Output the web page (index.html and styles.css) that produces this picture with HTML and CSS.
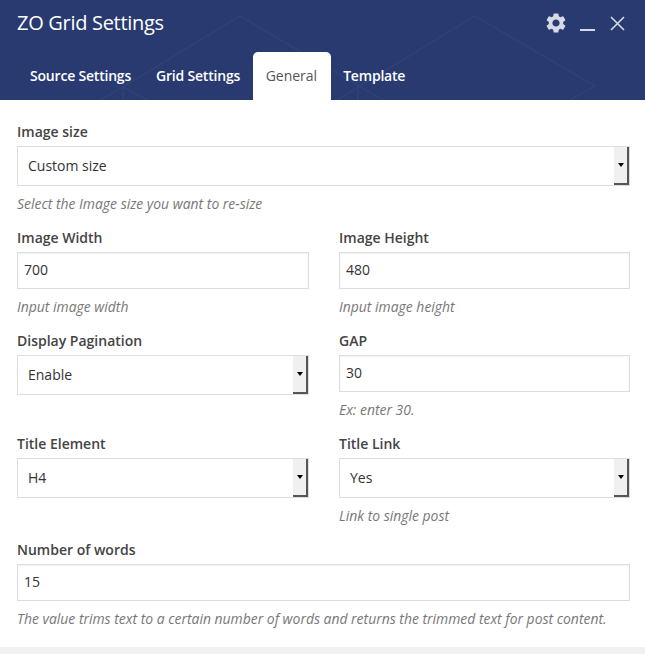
FILE: index.html
```html
<!DOCTYPE html>
<html lang="en">
<head>
<meta charset="utf-8">
<title>ZO Grid Settings</title>
<link rel="stylesheet" href="styles.css">
</head>
<body>
<div class="dialog">
  <header class="head">
    <svg class="pattern" width="645" height="100" viewBox="0 0 645 100" fill="none">
      <path d="M147 100L123 87L240 16L383 100M123 87V100M123 87L100 100"/>
      <path d="M337 100L475 16L595 86L570 100M358 85V100"/>
    </svg>
    <div class="titlebar">
      <h1 class="title">ZO Grid Settings</h1>
      <div class="actions">
        <svg class="icon" width="20" height="20" viewBox="2 2 20 20"><path fill="#d5dae6" d="M19.14 12.94c.04-.3.06-.61.06-.94 0-.32-.02-.64-.07-.94l2.03-1.58a.49.49 0 0 0 .12-.61l-1.92-3.32a.488.488 0 0 0-.59-.22l-2.39.96c-.5-.38-1.03-.7-1.62-.94l-.36-2.54a.484.484 0 0 0-.48-.41h-3.84c-.24 0-.43.17-.47.41l-.36 2.54c-.59.24-1.13.57-1.62.94l-2.39-.96c-.22-.08-.47 0-.59.22L2.74 8.87c-.12.21-.08.47.12.61l2.03 1.58c-.05.3-.09.63-.09.94s.02.64.07.94l-2.03 1.58a.49.49 0 0 0-.12.61l1.92 3.32c.12.22.37.29.59.22l2.39-.96c.5.38 1.03.7 1.62.94l.36 2.54c.05.24.24.41.48.41h3.84c.24 0 .44-.17.47-.41l.36-2.54c.59-.24 1.13-.56 1.62-.94l2.39.96c.22.08.47 0 .59-.22l1.92-3.32c.12-.22.07-.47-.12-.61l-2.01-1.58zM12 15.6c-1.98 0-3.6-1.62-3.6-3.6s1.62-3.6 3.6-3.6 3.6 1.62 3.6 3.6-1.62 3.6-3.6 3.6z"/></svg>
        <svg class="icon min" width="15" height="15" viewBox="0 0 15 15"><path stroke="#d5dae6" stroke-width="2" d="M0 14h15"/></svg>
        <svg class="icon" width="15" height="15" viewBox="0 0 15 15"><path stroke="#d5dae6" stroke-width="1.6" d="M1 1l13 13M14 1L1 14"/></svg>
      </div>
    </div>
    <nav class="tabs">
      <a class="tab">Source Settings</a>
      <a class="tab">Grid Settings</a>
      <a class="tab active">General</a>
      <a class="tab">Template</a>
    </nav>
  </header>
  <main class="form">
    <div class="field wide">
      <label class="label">Image size</label>
      <div class="select"><span class="value">Custom size</span><span class="arrow"></span></div>
      <p class="hint">Select the Image size you want to re-size</p>
    </div>
    <div class="field">
      <label class="label">Image Width</label>
      <div class="input">700</div>
      <p class="hint">Input image width</p>
    </div>
    <div class="field">
      <label class="label">Image Height</label>
      <div class="input">480</div>
      <p class="hint">Input image height</p>
    </div>
    <div class="field">
      <label class="label">Display Pagination</label>
      <div class="select"><span class="value">Enable</span><span class="arrow"></span></div>
    </div>
    <div class="field">
      <label class="label">GAP</label>
      <div class="input">30</div>
      <p class="hint">Ex: enter 30.</p>
    </div>
    <div class="field">
      <label class="label">Title Element</label>
      <div class="select"><span class="value">H4</span><span class="arrow"></span></div>
    </div>
    <div class="field">
      <label class="label">Title Link</label>
      <div class="select"><span class="value">Yes</span><span class="arrow"></span></div>
      <p class="hint">Link to single post</p>
    </div>
    <div class="field wide">
      <label class="label">Number of words</label>
      <div class="input">15</div>
      <p class="hint">The value trims text to a certain number of words and returns the trimmed text for post content.</p>
    </div>
  </main>
  <footer class="foot"></footer>
</div>
</body>
</html>
```
FILE: styles.css
```css
* { box-sizing: border-box; }
html, body { margin: 0; padding: 0; background: #fff; }
body { font-family: "Open Sans", "Noto Sans", sans-serif; color: #444; }
.dialog { width: 645px; height: 654px; display: flex; flex-direction: column; overflow: hidden; }
.head { position: relative; height: 100px; background: #283a70; display: flex; flex-direction: column; flex: none; }
.pattern { position: absolute; left: 0; top: 0; }
.pattern path { stroke: #2e4177; stroke-width: 2; }
.titlebar { position: relative; display: flex; justify-content: space-between; align-items: center; height: 52px; padding: 0 20px 6px 17px; }
.title { margin: 0; font-size: 20px; font-weight: 400; color: #fff; line-height: 28px; letter-spacing: -0.3px; }
.actions { display: flex; align-items: center; gap: 14px; }
.icon { display: block; }
.min { margin-right: 1px; }
.tabs { position: relative; display: flex; height: 48px; padding-left: 17.5px; }
.tab { display: block; padding: 14px 12.5px 0; font-size: 14px; line-height: 20px; font-weight: 600; letter-spacing: -0.2px; color: #fff; border-radius: 5px 5px 0 0; }
.tab.active { background: #fff; color: #555; font-weight: 400; letter-spacing: 0; padding: 14px 13.5px 0 13px; }
.form { flex: 1; display: grid; grid-template-columns: 292px 291px; column-gap: 30px; align-content: start; padding: 22px 15px 0 17px; }
.field { margin-bottom: 14px; }
.wide { grid-column: 1 / -1; }
.label { display: block; font-size: 14px; line-height: 20px; font-weight: 600; color: #444; margin-bottom: 4px; }
.input, .select { border: 1px solid #ddd; background: #fff; font-size: 14px; color: #333; display: flex; align-items: center; }
.input { height: 37px; padding: 0 6px 2px; box-shadow: inset 0 1px 2px rgba(0,0,0,.05); }
.select { height: 40px; justify-content: space-between; }
.select .value { padding: 0 0 2px 10px; }
.arrow { width: 15px; align-self: stretch; background: #f0f0f0; border-right: 2px solid #555; border-bottom: 2px solid #555; display: flex; align-items: center; justify-content: center; }
.arrow::after { content: ""; border: 3px solid transparent; border-top: 4px solid #000; border-bottom: 0; }
.hint { margin: 8px 0 0; font-size: 13.93px; line-height: 20px; font-style: italic; color: #777; }
.foot { height: 7px; background: #f1f1f1; flex: none; }
```
